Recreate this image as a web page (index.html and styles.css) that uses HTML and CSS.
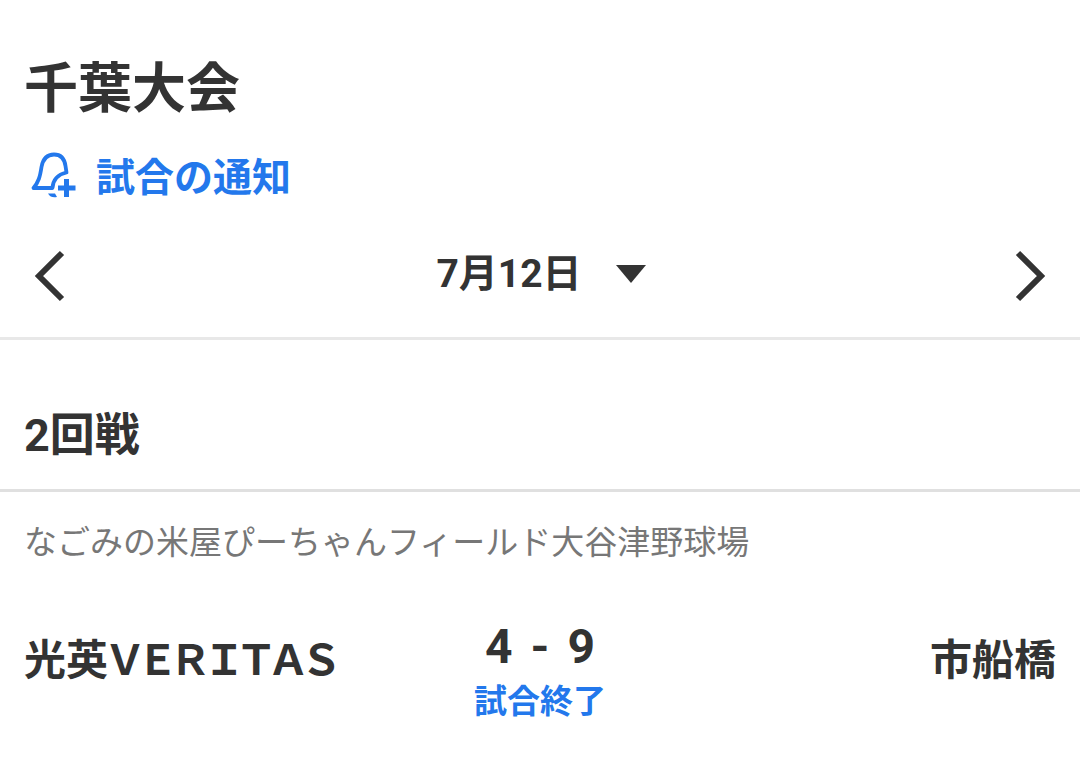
FILE: index.html
```html
<!DOCTYPE html>
<html lang="ja">
<head>
<meta charset="utf-8">
<meta name="viewport" content="width=device-width, initial-scale=1">
<title>千葉大会</title>
<link rel="stylesheet" href="styles.css">
</head>
<body>
<header class="heading">
  <h1 class="title">千葉大会</h1>
  <button class="notify" type="button">
    <svg class="bell" viewBox="0 0 48 48" aria-hidden="true">
      <path d="M22.500 38H3.500C8.500 32 10 27 11.500 17C13 8.500 17 4.500 24 4.500C31 4.500 34.500 8.500 35.500 16L36.500 22.500C27.500 24.500 23 29.500 22.500 38Z" fill="none" stroke="currentColor" stroke-width="3.800" stroke-linejoin="round"/>
      <path d="M18 43.500H25L27 47Q21 48.500 18 43.500ZM34 29H39V35.500H45.500V40.500H39V47H34V40.500H28V35.500H34Z" fill="currentColor"/>
    </svg>
    <span>試合の通知</span>
  </button>
</header>
<nav class="days" aria-label="日付">
  <button class="arrow" type="button" aria-label="前の日"><svg viewBox="0 0 32 52" aria-hidden="true"><path d="M29 3L6 26L29 49"/></svg></button>
  <button class="date" type="button"><span>7月12日</span><svg class="caret" viewBox="0 0 30 18" aria-hidden="true"><path d="M0 0H30L15 18Z"/></svg></button>
  <button class="arrow" type="button" aria-label="次の日"><svg viewBox="0 0 32 52" aria-hidden="true"><path d="M3 3L26 26L3 49"/></svg></button>
</nav>
<main>
  <h2 class="round">2回戦</h2>
  <section class="game">
    <p class="venue">なごみの米屋ぴーちゃんフィールド大谷津野球場</p>
    <div class="match">
      <p class="team">光英<span class="latin">ＶＥＲＩＴＡＳ</span></p>
      <div class="result">
        <p class="score"><span>4</span><span>-</span><span>9</span></p>
        <p class="status">試合終了</p>
      </div>
      <p class="team away">市船橋</p>
    </div>
  </section>
</main>
</body>
</html>
```
FILE: styles.css
```css
* {
  box-sizing: border-box;
}

body {
  margin: 0;
  background: #fff;
  color: #333;
  font-family: Roboto, "Noto Sans CJK JP", sans-serif;
}

h1, h2, p {
  margin: 0;
}

button {
  padding: 0;
  border: 0;
  background: none;
  color: inherit;
  font: inherit;
}

.heading {
  padding: 50px 24px 0;
}

.title {
  font-size: 54px;
  line-height: 80px;
  font-weight: 700;
}

.notify {
  display: flex;
  align-items: flex-start;
  gap: 18px;
  margin-top: 20px;
  padding-left: 6px;
  color: #2378ec;
  font-size: 39px;
  line-height: 56px;
  font-weight: 700;
}

.bell {
  width: 48px;
  height: 48px;
}

.days {
  display: flex;
  align-items: center;
  justify-content: space-between;
  height: 134px;
  padding: 9px 33px 0;
  border-bottom: 3px solid #e8e8e8;
}

.arrow svg {
  display: block;
  width: 32px;
  height: 52px;
  fill: none;
  stroke: #333;
  stroke-width: 6px;
}

.date {
  display: flex;
  align-items: center;
  gap: 34px;
  padding: 0 0 4px 2px;
  font-size: 39px;
  line-height: 56px;
  font-weight: 700;
}

.caret {
  width: 30px;
  height: 18px;
  fill: #333;
}

.round {
  padding: 62px 24px 19px;
  border-bottom: 3px solid #e0e0e0;
  font-size: 45px;
  line-height: 68px;
  font-weight: 700;
}

.game {
  padding: 25px 24px 36px;
}

.venue {
  color: #777;
  font-size: 33px;
  line-height: 52px;
}

.match {
  display: grid;
  grid-template-columns: 1fr auto 1fr;
  align-items: start;
  margin-top: 48px;
}

.team {
  padding-top: 14px;
  font-size: 42px;
  line-height: 60px;
  font-weight: 700;
}

.latin {
  font-feature-settings: "palt";
}

.away {
  text-align: right;
}

.result {
  text-align: center;
  font-weight: 700;
}

.score {
  display: flex;
  justify-content: center;
  gap: 18px;
  font-size: 48px;
  line-height: 60px;
}

.status {
  color: #2378ec;
  font-size: 33px;
  line-height: 50px;
}
```
